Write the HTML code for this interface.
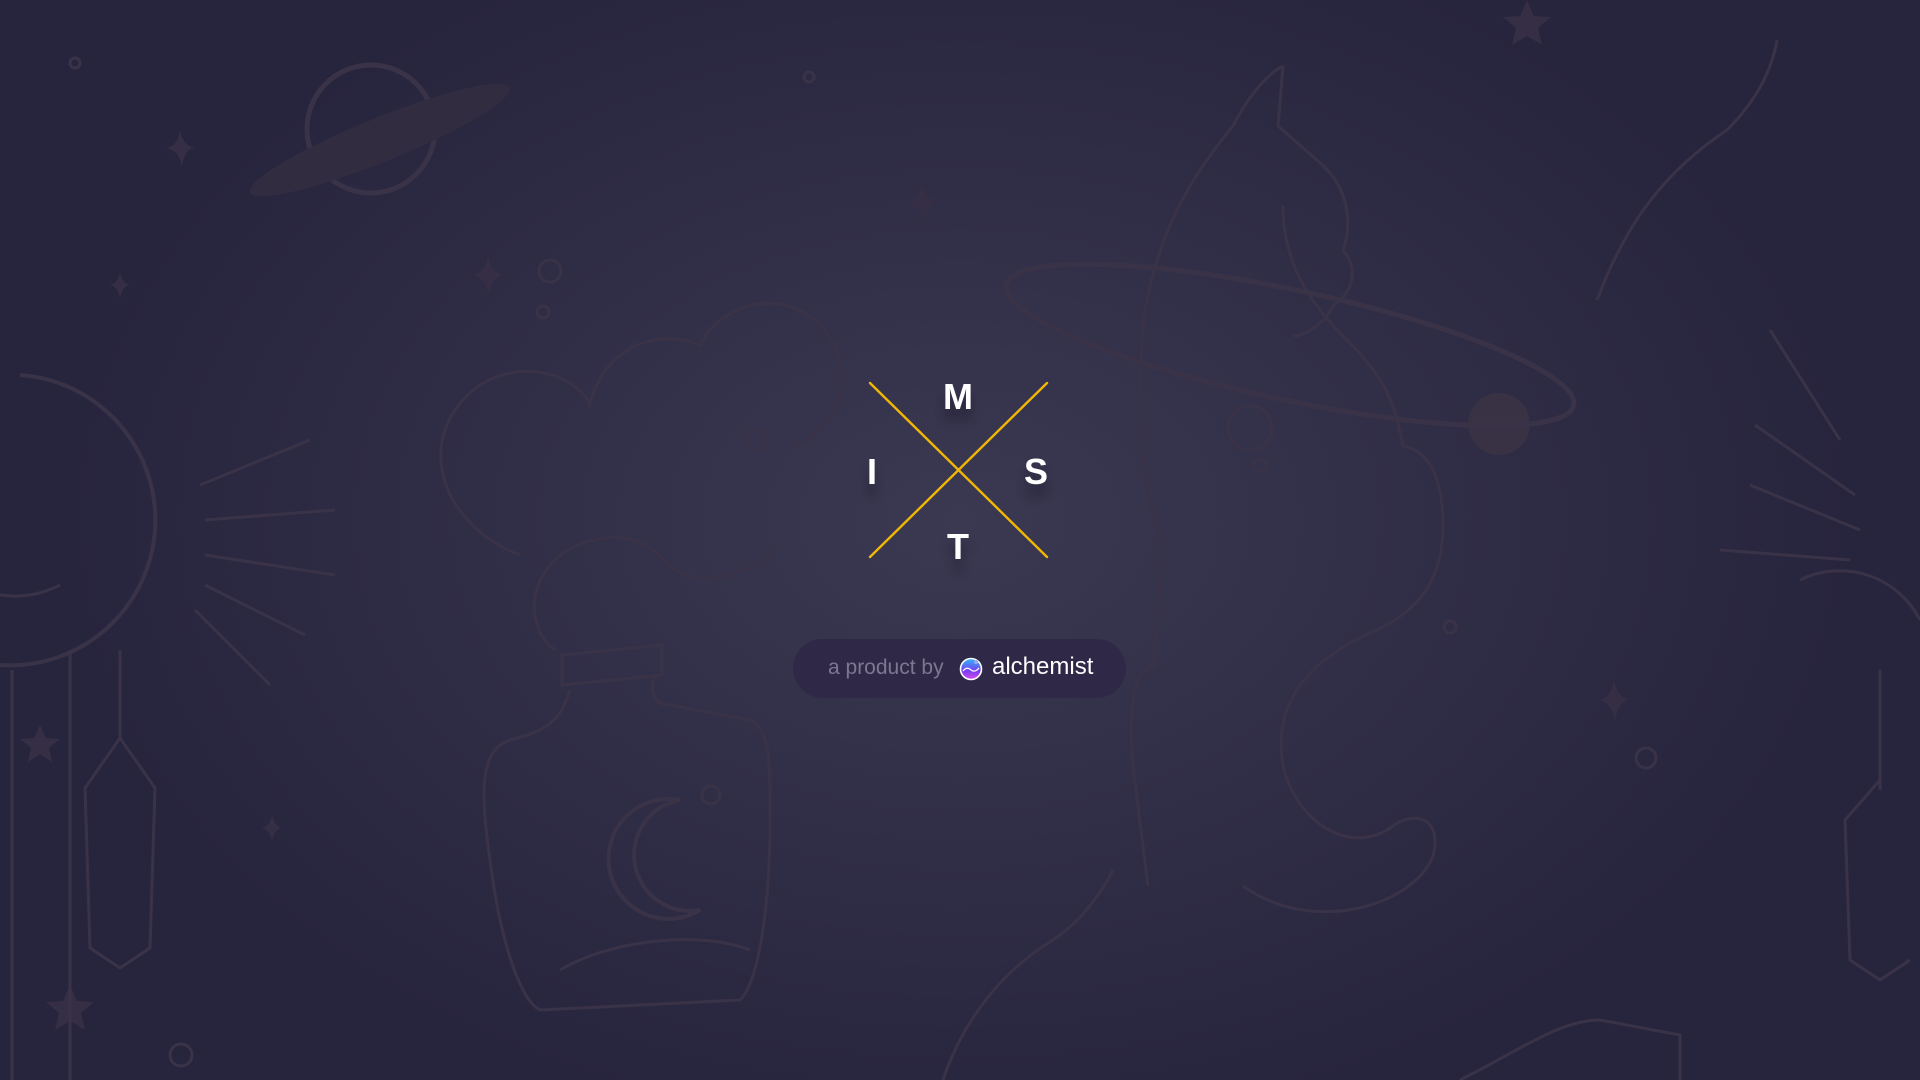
<!DOCTYPE html>
<html><head><meta charset="utf-8"><style>
html,body{margin:0;padding:0;width:1920px;height:1080px;overflow:hidden}
body{background:radial-gradient(ellipse 900px 620px at 960px 520px,#3b3951 0%,#322f48 45%,#27243d 100%);font-family:"Liberation Sans",sans-serif;position:relative}
svg.bg{position:absolute;left:0;top:0}
.l{position:absolute;color:#fff;font-weight:bold;font-size:36px;text-shadow:0 12px 10px rgba(20,18,35,.45);transform:translate(-50%,-50%)}
.pill{position:absolute;left:793px;top:639px;width:333px;height:59px;border-radius:30px;background:#302847;}
.pill .a{position:absolute;left:35px;top:17px;font-size:21px;color:#7d7891}
.pill .b{position:absolute;left:199px;top:14px;font-size:24px;color:#fff}
</style></head><body>
<svg class="bg" width="1920" height="1080" fill="none" stroke="#3a3348" stroke-width="3">
<!-- planet -->
<circle cx="371" cy="129" r="64" stroke-width="5"/>
<ellipse cx="380" cy="140" rx="140" ry="22" transform="rotate(-22 380 140)" fill="#322c40" stroke="none"/>
<!-- stars -->
<g fill="#352e44" stroke="none">
<path d="M180 130 q4 18 16 17 q-12 2 -14 20 q-3 -17 -16 -19 q12 -2 14 -18z"/>
<path d="M488 255 q4 20 17 19 q-13 2 -16 22 q-3 -19 -17 -21 q13 -2 16 -20z"/>
<path d="M922 182 q4 20 17 19 q-13 2 -16 22 q-3 -19 -17 -21 q13 -2 16 -20z"/>
<path d="M120 272 q3 13 11 12 q-9 2 -11 15 q-2 -13 -11 -14 q9 -1 11 -13z"/>
<path d="M1614 680 q4 20 17 19 q-13 2 -16 22 q-3 -19 -17 -21 q13 -2 16 -20z"/>
<path d="M272 815 q3 13 11 12 q-9 2 -11 15 q-2 -13 -11 -14 q9 -1 11 -13z"/>
<path d="M70 985 l7 16 17 1 -13 11 4 17 -15 -9 -15 9 4 -17 -13 -11 17 -1z"/>
<path d="M40 725 l6 13 14 1 -11 9 3 14 -12 -8 -12 8 3 -14 -11 -9 14 -1z"/>
<path d="M1527 0 l7 16 17 1 -13 11 4 17 -15 -9 -15 9 4 -17 -13 -11 17 -1z"/>
<circle cx="1499" cy="424" r="31" fill="#393244"/>
</g>
<!-- big moon left -->
<path d="M20 375 a100 100 0 1 1 -20 290 a110 110 0 0 0 20 -290z" stroke-width="4"/>
<path d="M0 595 a100 100 0 0 0 60 -10"/>
<line x1="70" y1="650" x2="70" y2="1080"/><line x1="120" y1="650" x2="120" y2="740"/><line x1="12" y1="670" x2="12" y2="1080"/>
<path d="M120 738 l35 50 -5 160 -30 20 -30 -20 -5 -160z"/>
<!-- rays -->
<path d="M200 485 l110 -45 M205 520 l130 -10 M205 555 l130 20 M205 585 l100 50 M195 610 l75 75"/>
<path d="M1860 530 l-110 -45 M1855 495 l-100 -70 M1840 440 l-70 -110 M1850 560 l-130 -10"/>
<!-- cloud/bottle -->
<path d="M520 555 c-80 -30 -110 -120 -40 -170 c50 -30 100 -5 110 20 c10 -50 60 -80 110 -60 c20 -40 80 -60 120 -20 c40 40 20 110 -30 120"/>
<path d="M555 650 c-40 -30 -20 -100 40 -110 c40 -10 60 10 80 30 c30 20 80 0 100 -20"/>
<path d="M562 655 l100 -10 l0 30 l-100 10z"/>
<path d="M570 690 c-10 30 -20 40 -60 50 c-30 10 -30 50 -20 120 c10 80 30 140 50 150 l200 -10 c20 -20 30 -100 30 -180 c0 -60 0 -90 -20 -100 l-80 -15 c-20 0 -20 -20 -15 -30"/>
<path d="M680 800 a60 60 0 1 0 20 110 a50 50 0 0 1 -20 -110z" stroke-width="4"/>
<path d="M560 970 c50 -30 140 -40 190 -20"/>
<!-- cat -->
<path d="M1283 66 c-20 10 -40 40 -50 60 c-50 60 -80 120 -90 200 c-5 80 -5 150 20 220 l-10 120 c-20 5 -25 40 -20 100 l15 120"/>
<path d="M1283 66 l-5 60 l40 35 c30 25 35 60 25 90 c15 15 12 40 -10 55 c-10 20 -30 30 -40 30"/>
<path d="M1283 206 c0 60 30 100 60 130 c40 40 50 60 60 110 c30 5 40 40 40 80 c0 60 -30 90 -80 110 c-60 30 -90 70 -80 130 c15 60 70 90 110 60 c20 -15 50 -10 40 30 c-20 50 -120 80 -190 30"/>
<ellipse cx="1290" cy="345" rx="290" ry="55" transform="rotate(12 1290 345)" stroke-width="5"/>
<circle cx="1250" cy="428" r="22"/><circle cx="1260" cy="465" r="6"/><circle cx="1646" cy="758" r="10"/><circle cx="1450" cy="627" r="6"/>
<circle cx="550" cy="271" r="11"/><circle cx="543" cy="312" r="6"/><circle cx="755" cy="440" r="10"/><circle cx="711" cy="795" r="9"/>
<circle cx="181" cy="1055" r="11"/><circle cx="75" cy="63" r="5"/><circle cx="809" cy="77" r="5"/>
<!-- plants -->
<path d="M1597 300 c30 -80 70 -130 130 -170 c30 -30 45 -60 50 -90"/>
<path d="M943 1080 c20 -60 60 -110 110 -140 c30 -20 50 -50 60 -70"/>
<path d="M1460 1080 c60 -30 100 -60 140 -60 l80 15 l0 45"/>
<path d="M1800 580 a90 90 0 0 1 120 40 M1880 670 l0 120 M1880 780 l-35 40 5 140 30 20 30 -20"/>
</svg>
<svg style="position:absolute;left:0;top:0" width="1920" height="1080">
<line x1="870" y1="383" x2="1047" y2="557" stroke="#f2b705" stroke-width="2.4" stroke-linecap="round"/>
<line x1="1047" y1="383" x2="870" y2="557" stroke="#f2b705" stroke-width="2.4" stroke-linecap="round"/>
</svg>
<div class="l" style="left:958px;top:397px">M</div>
<div class="l" style="left:872px;top:472px">I</div>
<div class="l" style="left:1036px;top:472px">S</div>
<div class="l" style="left:958px;top:547px">T</div>
<div class="pill"><span class="a">a product by</span>
<svg style="position:absolute;left:166px;top:17px" width="26" height="26"><defs><linearGradient id="g" x1="0" y1="0" x2="0" y2="1"><stop offset="0" stop-color="#2fb8ff"/><stop offset=".6" stop-color="#7b3cf0"/><stop offset="1" stop-color="#d54cf0"/></linearGradient></defs><circle cx="12" cy="13" r="10.5" fill="url(#g)" stroke="#fff" stroke-width="1.6"/><path d="M4 15 q4 -5 8 -1 q4 3 8 -2" stroke="#fff" stroke-width="1.2" fill="none"/><circle cx="17" cy="6" r="2" fill="#9ae"/></svg>
<span class="b">alchemist</span></div>
</body></html>
